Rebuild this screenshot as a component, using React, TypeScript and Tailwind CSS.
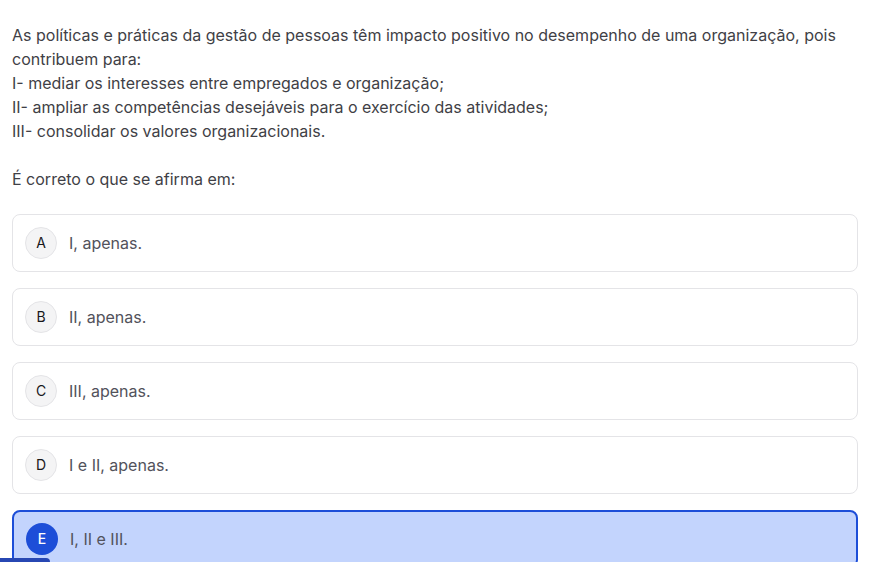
import React from "react";

type Option = { letter: string; text: string };

const options: Option[] = [
  { letter: "A", text: "I, apenas." },
  { letter: "B", text: "II, apenas." },
  { letter: "C", text: "III, apenas." },
  { letter: "D", text: "I e II, apenas." },
  { letter: "E", text: "I, II e III." },
];

const selected = "E";

const App: React.FC = () => {
  return (
    <div
      className="min-h-screen bg-white px-3 pt-[23px] text-[16px] leading-6 text-[#3f3f46]"
      style={{ fontFamily: "Inter, 'Noto Sans', sans-serif" }}
    >
      <div>
        <p>
          As políticas e práticas da gestão de pessoas têm impacto positivo no desempenho de uma organização, pois
          contribuem para:
        </p>
        <p>I- mediar os interesses entre empregados e organização;</p>
        <p>II- ampliar as competências desejáveis para o exercício das atividades;</p>
        <p>III- consolidar os valores organizacionais.</p>
        <p>&nbsp;</p>
        <p>É correto o que se afirma em:</p>
      </div>

      <div className="mt-[23px] flex flex-col gap-4">
        {options.map((opt) => {
          const active = opt.letter === selected;
          return (
            <div
              key={opt.letter}
              className={`flex h-[58px] w-[846px] items-center gap-3 rounded-lg px-3 ${
                active
                  ? "border-2 border-[#1d4ed8] bg-[#c3d4fd]"
                  : "border border-[#e4e4e7] bg-white"
              }`}
            >
              <div
                className={`flex h-8 w-8 shrink-0 items-center justify-center rounded-full text-[14px] ${
                  active
                    ? "bg-[#1d4ed8] text-white font-medium"
                    : "border border-[#e4e4e7] bg-[#f4f4f5] text-[#18181b]"
                }`}
              >
                {opt.letter}
              </div>
              <span className="text-[#52525b]">{opt.text}</span>
            </div>
          );
        })}
      </div>

      {/* barra de progresso no rodapé */}
      <div className="fixed bottom-0 left-0 h-[4px] w-[50px] rounded-tr-md bg-[#2747b3]"></div>
    </div>
  );
};

export default App;
